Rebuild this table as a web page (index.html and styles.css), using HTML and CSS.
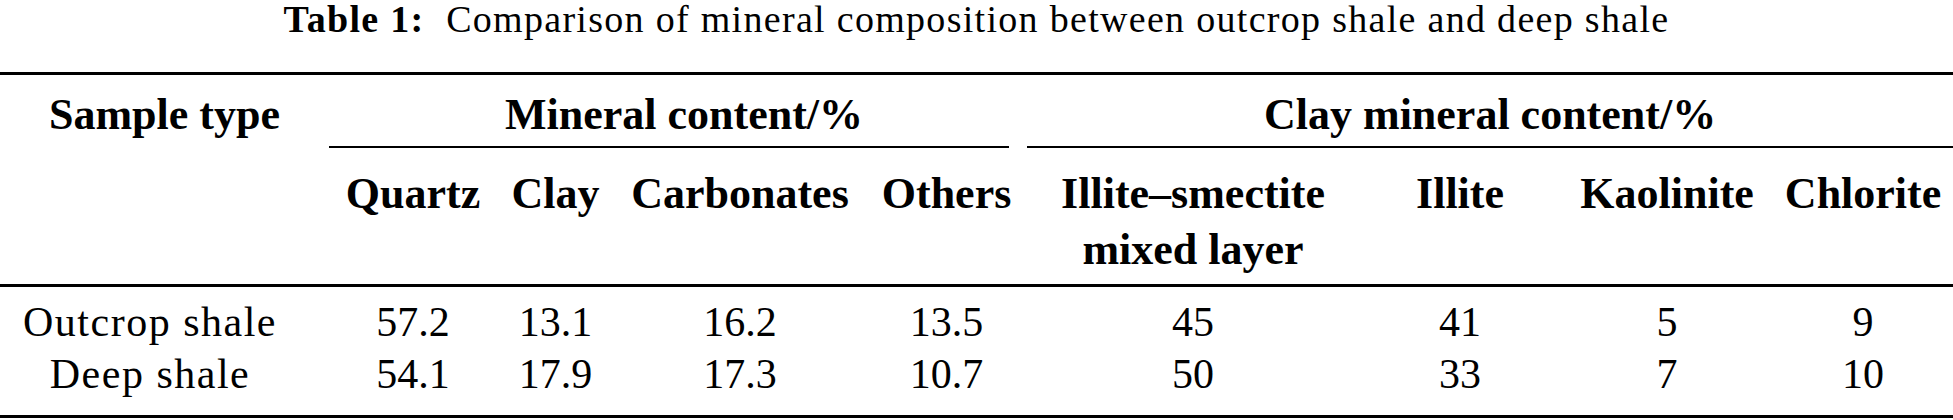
FILE: index.html
```html
<!DOCTYPE html>
<html lang="en">
<head>
  <meta charset="UTF-8" />
  <meta name="viewport" content="width=device-width, initial-scale=1.0"/>
  <title>Table 1</title>
  <link rel="stylesheet" href="styles.css">
</head>
<body>
  <div class="caption"><b>Table 1:</b>&nbsp; Comparison of mineral composition between outcrop shale and deep shale</div>

  <table class="minerals">
    <colgroup>
      <col class="col-name">
      <col class="col-quartz">
      <col class="col-clay">
      <col class="col-carb">
      <col class="col-others">
      <col class="col-is">
      <col class="col-illite">
      <col class="col-kaol">
      <col class="col-chlor">
    </colgroup>
    <thead>
      <tr class="head-top">
        <th class="sample" rowspan="2">Sample type</th>
        <th colspan="4"><div class="group group-mineral">Mineral content/%</div></th>
        <th colspan="4"><div class="group">Clay mineral content/%</div></th>
      </tr>
      <tr class="head-sub">
        <th>Quartz</th>
        <th>Clay</th>
        <th>Carbonates</th>
        <th>Others</th>
        <th>Illite–smectite<br>mixed layer</th>
        <th>Illite</th>
        <th>Kaolinite</th>
        <th>Chlorite</th>
      </tr>
    </thead>
    <tbody>
      <tr class="row-first">
        <td class="name">Outcrop shale</td>
        <td>57.2</td>
        <td>13.1</td>
        <td>16.2</td>
        <td>13.5</td>
        <td>45</td>
        <td>41</td>
        <td>5</td>
        <td>9</td>
      </tr>
      <tr class="row-last">
        <td class="name">Deep shale</td>
        <td>54.1</td>
        <td>17.9</td>
        <td>17.3</td>
        <td>10.7</td>
        <td>50</td>
        <td>33</td>
        <td>7</td>
        <td>10</td>
      </tr>
    </tbody>
  </table>
</body>
</html>
```

FILE: styles.css
```css
body {
  margin: 0;
  font-family: "Liberation Serif", "Times New Roman", serif;
  color: #000;
  background-color: #fff;
}

.caption {
  font-size: 38px;
  line-height: 38px;
  letter-spacing: 1.3px;
  text-align: center;
  margin-bottom: 34px;
}

.minerals {
  width: 1953px;
  table-layout: fixed;
  border-collapse: separate;
  border-spacing: 0;
  border-top: 3px solid #000;
  border-bottom: 3px solid #000;
}

.col-name { width: 329px; }
.col-quartz { width: 168px; }
.col-clay { width: 117px; }
.col-carb { width: 252px; }
.col-others { width: 161px; }
.col-is { width: 332px; }
.col-illite { width: 202px; }
.col-kaol { width: 212px; }
.col-chlor { width: 180px; }

th {
  font-size: 44px;
  line-height: 56px;
  font-weight: bold;
  text-align: center;
  vertical-align: top;
  padding: 0;
  white-space: nowrap;
}

.head-top th {
  padding-top: 12px;
}

.group {
  border-bottom: 2px solid #000;
  padding-bottom: 3px;
}

.group-mineral {
  margin-right: 18px;
  padding-left: 30px;
}

.head-sub th {
  padding-top: 18px;
  padding-bottom: 6px;
  border-bottom: 3px solid #000;
}

/* Sample type sits across both header rows */
.head-top th.sample {
  padding-bottom: 6px;
  border-bottom: 3px solid #000;
}

td {
  font-size: 42px;
  line-height: 52px;
  text-align: center;
  padding: 0;
  white-space: nowrap;
}

td.name {
  padding-right: 29px;
  letter-spacing: 1.5px;
}

.row-first td {
  padding-top: 9px;
}

.row-last td {
  padding-bottom: 15px;
}
```
